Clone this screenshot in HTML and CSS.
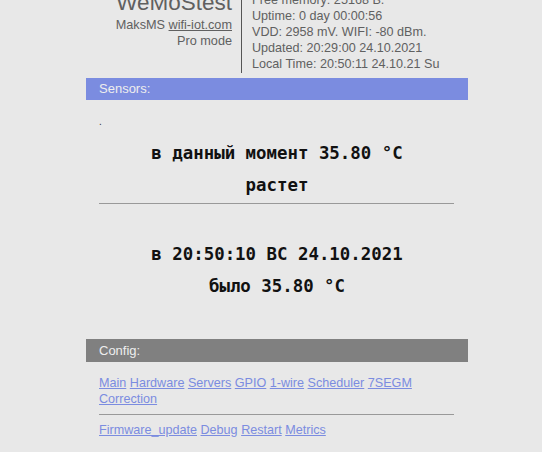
FILE: index.html
```html
<!DOCTYPE html>
<html>
<head>
<meta charset="utf-8">
<link rel="stylesheet" href="styles.css">
</head>
<body>
<div class="page">
  <div class="header">
    <div class="brand">
      <div class="title">WeMoStest</div>
      <div class="line">MaksMS <a href="#">wifi-iot.com</a></div>
      <div class="line">Pro mode</div>
    </div>
    <div class="info">
      <div class="line">Free memory: 25168 B.</div>
      <div class="line">Uptime: 0 day 00:00:56</div>
      <div class="line">VDD: 2958 mV. WIFI: -80 dBm.</div>
      <div class="line">Updated: 20:29:00 24.10.2021</div>
      <div class="line">Local Time: 20:50:11 24.10.21 Su</div>
    </div>
  </div>
  <div class="bar sensors">Sensors:</div>
  <div class="section">
    <div class="dot">.</div>
    <div class="big first">в данный момент 35.80 °C</div>
    <div class="big">растет</div>
    <div class="rule"></div>
    <div class="big gap">в 20:50:10 ВС 24.10.2021</div>
    <div class="big">было 35.80 °C</div>
  </div>
  <div class="bar config">Config:</div>
  <div class="links">
    <div class="linkrow"><a href="#">Main</a> <a href="#">Hardware</a> <a href="#">Servers</a> <a href="#">GPIO</a> <a href="#">1-wire</a> <a href="#">Scheduler</a> <a href="#">7SEGM</a> <a href="#">Correction</a></div>
    <div class="rule"></div>
    <div class="linkrow"><a href="#">Firmware_update</a> <a href="#">Debug</a> <a href="#">Restart</a> <a href="#">Metrics</a></div>
  </div>
</div>
</body>
</html>
```
FILE: styles.css
```css
html, body {
  margin: 0;
  padding: 0;
  background: #e8e8e8;
}
body {
  font-family: "Liberation Sans", Arial, sans-serif;
  overflow: hidden;
}
.page {
  width: 382px;
  margin-left: 86px;
}
.header {
  display: flex;
  margin-top: -20px;
  height: 93px;
}
.brand {
  width: 146px;
  text-align: right;
  color: #606060;
  padding-right: 9px;
  border-right: 1px solid #555;
  font-size: 12.7px;
  line-height: 16px;
}
.brand .title {
  font-size: 22.5px;
  line-height: 26px;
  margin-top: 10px;
  margin-bottom: 1px;
}
.brand a {
  color: #606060;
}
.info {
  padding-left: 10px;
  color: #606060;
  font-size: 12.6px;
  line-height: 16px;
  padding-top: 12px;
}
.bar {
  color: #eee;
  font-size: 13px;
  padding-left: 13px;
  margin-top: 5px;
  height: 22px;
  line-height: 21px;
}
.sensors {
  background: #7b8ce0;
}
.config {
  background: #808080;
  height: 23px;
  line-height: 23px;
  margin-top: 0;
}
.section {
  padding: 0 13px 37px;
}
.dot {
  font-size: 10px;
  line-height: 12px;
  padding-top: 16px;
  color: #333;
}
.big {
  font-family: "DejaVu Sans Mono", "Liberation Mono", monospace;
  font-weight: bold;
  font-size: 17.4px;
  line-height: 32px;
  text-align: center;
  color: #111;
}
.big.first {
  margin-top: 9px;
}
.big.gap {
  margin-top: 34px;
}
.rule {
  height: 1px;
  background: #999;
  margin: 2px 1px 0 0;
}
.links {
  padding: 13px 13px 0;
  font-size: 12.6px;
  line-height: 16px;
}
.links .rule {
  margin: 7px 1px 7px 0;
}
.links a {
  color: #7b8ce0;
}
```
